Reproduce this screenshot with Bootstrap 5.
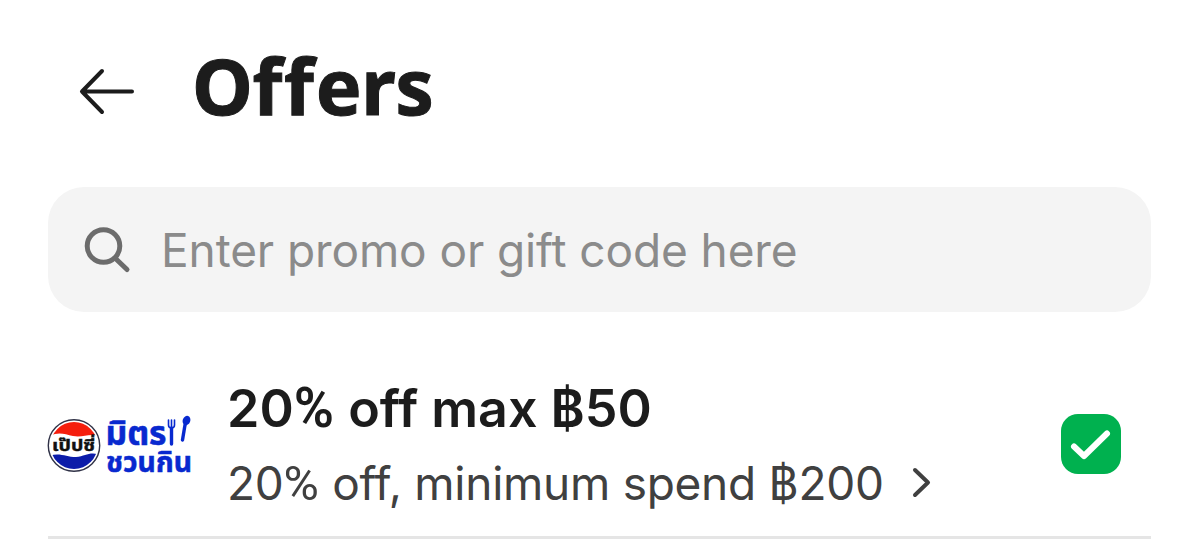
<!DOCTYPE html>
<html lang="en">
<head>
    <meta charset="UTF-8">
    <meta name="viewport" content="width=device-width, initial-scale=1">
    <title>Offers</title>
    <link href="https://cdn.jsdelivr.net/npm/bootstrap@5.3.0/dist/css/bootstrap.min.css" rel="stylesheet">
    <style>
        body { font-family: Inter, "Liberation Sans", sans-serif; color: #1c1c1c; overflow: hidden; font-variant-ligatures: none; }
        svg { display: block; flex: none; }
        .page-head { height: 187px; padding: 0 0 5px 78px; gap: 56px; }
        .page-title { font: 700 77px/100px "Noto Sans", "Open Sans", sans-serif; letter-spacing: -.4px; font-variant-ligatures: none; padding-bottom: 10px; -webkit-text-stroke: 1px #1c1c1c; }
        .page-title span { letter-spacing: 1.8px; }
        .promo-search { height: 125px; margin: 0 48px; padding-left: 34px; background: #f4f4f4; border-radius: 36px; }
        .promo-search .form-control { font-size: 46px; line-height: 60px; padding: 0 0 0 29px; letter-spacing: -.1px; }
        .promo-search .form-control::placeholder { color: #8b8b8b; opacity: 1; }
        .offer { height: 227px; margin: 0 48px; padding: 66px 30px 0 0; border-bottom: 3px solid #e5e5e5; }
        .offer-logo { width: 144px; height: 60px; margin: 37px 35px 0 0; overflow: visible; }
        .offer-title { font-size: 52px; font-weight: 600; line-height: 62px; }
        .offer-info { font-size: 46px; line-height: 60px; margin-top: 13px; color: #404040; letter-spacing: -.27px; }
        .percent { font-family: Roboto, sans-serif; font-size: 1.05em; line-height: 1; margin-right: .02em; }
        .offer-check { width: 60px; height: 60px; margin-top: 36px; background: #00b14f; border-radius: 17px; }
        .thai { font-family: "Noto Sans Thai", "Noto Sans", sans-serif; font-weight: 700; }
    </style>
</head>
<body class="bg-white">

    <header class="page-head d-flex align-items-center">
        <svg width="58" height="48" viewBox="0 0 58 48" fill="none" stroke="#1c1c1c" stroke-width="4" stroke-linecap="round" stroke-linejoin="round">
            <path d="M54 24.500H5M24 4L4 24.500L24 45"/>
        </svg>
        <h1 class="page-title m-0">O<span>ff</span>ers</h1>
    </header>

    <main>
        <form class="promo-search d-flex align-items-center">
            <svg width="50" height="50" viewBox="0 0 50 50" fill="none" stroke="#6c6c6c" stroke-width="5" stroke-linecap="round">
                <circle cx="21.500" cy="21" r="16.300"/>
                <path d="M33.500 33.500L45 44.500"/>
            </svg>
            <input type="text" class="form-control bg-transparent border-0 shadow-none" placeholder="Enter promo or gift code here">
        </form>

        <div class="offer d-flex align-items-start">
            <svg class="offer-logo" viewBox="48 415 144 60">
                <defs>
                    <clipPath id="globe"><circle cx="74" cy="445.500" r="23.500"/></clipPath>
                </defs>
                <circle cx="74" cy="445.500" r="25.700" fill="#fff" stroke="#303247" stroke-width="1.400"/>
                <g clip-path="url(#globe)">
                    <path d="M48 420H100V437C90 432 84 438 73 436C64 434 58 431 48 437Z" fill="#f51e0d"/>
                    <path d="M48 456C60 452 66 457 76 457C86 456 90 451 100 455V472H48Z" fill="#0c1ca9"/>
                </g>
                <text class="thai" x="52" y="451" font-size="16" textLength="43" lengthAdjust="spacingAndGlyphs" fill="#111" stroke="#111" stroke-width=".4">เป๊ปซี่</text>
                <text class="thai" x="105.500" y="445" font-size="34" textLength="61" lengthAdjust="spacingAndGlyphs" fill="#0829cf" stroke="#0829cf" stroke-width=".5">มิตร</text>
                <text class="thai" x="106" y="471.500" font-size="28" textLength="86" lengthAdjust="spacingAndGlyphs" fill="#0829cf" stroke="#0829cf" stroke-width=".5">ชวนกิน</text>
                <g stroke="#0829cf" fill="none" stroke-linecap="round">
                    <path d="M168.500 420V425Q168.500 428 171.500 428Q174.500 428 174.500 425V420M171.500 420V427" stroke-width="1.600"/>
                    <path d="M171.500 428V444" stroke-width="3.400"/>
                    <path d="M185 425L182.500 440" stroke-width="3.400"/>
                </g>
                <ellipse cx="186.500" cy="420.500" rx="3.800" ry="4.800" transform="rotate(20 186.500 420.500)" fill="#0829cf"/>
            </svg>
            <div>
                <div class="offer-title">20<span class="percent">%</span> off max ฿50</div>
                <div class="offer-info d-flex align-items-center">
                    <div>20<span class="percent">%</span> off, minimum spend ฿200</div>
                    <svg class="ms-4" width="24" height="32" viewBox="0 0 24 32" fill="none" stroke="#404040" stroke-width="4" stroke-linecap="round" stroke-linejoin="round">
                        <path d="M7 3L20 15.500L7 28"/>
                    </svg>
                </div>
            </div>
            <div class="offer-check ms-auto">
                <svg width="60" height="60" viewBox="0 0 60 60" fill="none" stroke="#fff" stroke-width="6" stroke-linecap="round" stroke-linejoin="round">
                    <path d="M13 32.500L23 42L46 19.500"/>
                </svg>
            </div>
        </div>
    </main>

    <script src="https://cdn.jsdelivr.net/npm/bootstrap@5.3.0/dist/js/bootstrap.bundle.min.js"></script>
</body>
</html>
